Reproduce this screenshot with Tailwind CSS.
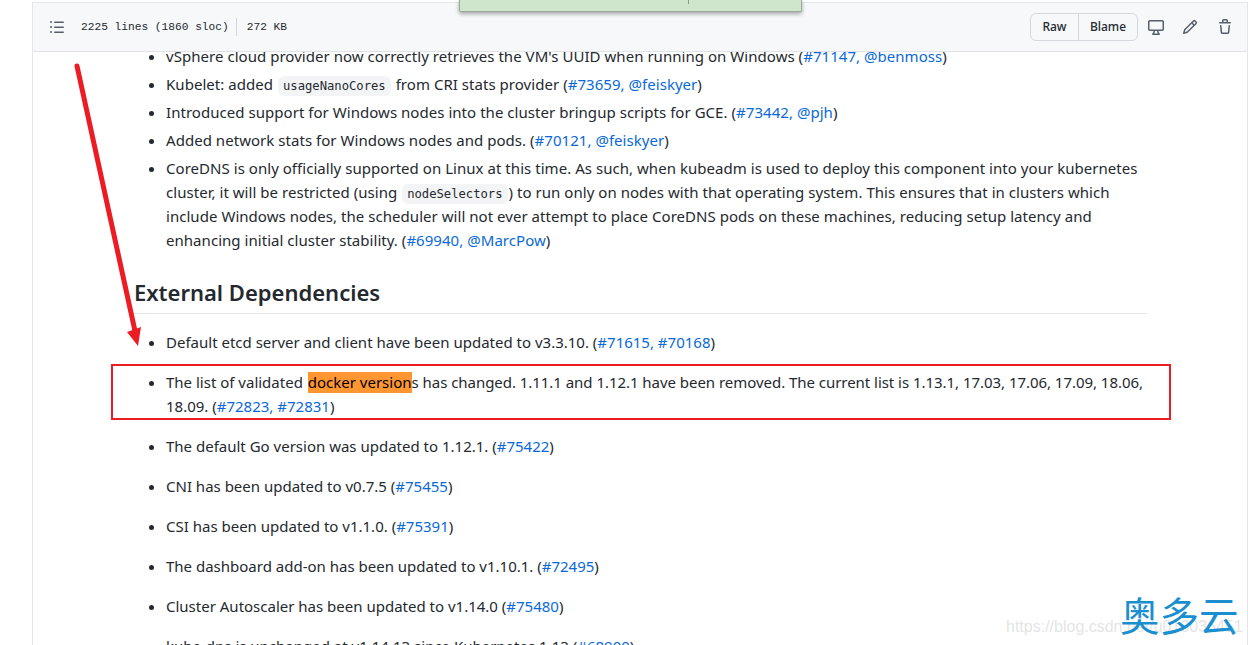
<!DOCTYPE html>
<html lang="en">
<head>
<meta charset="UTF-8">
<title>CHANGELOG-1.14.md</title>
<script src="https://cdn.jsdelivr.net/npm/@tailwindcss/browser@4"></script>
</head>
<body class="bg-white h-screen overflow-hidden relative font-['Noto_Sans',sans-serif] text-[#24292f]">
  <!-- File box -->
  <div class="ml-[32px] mt-[2px] h-[643px] border-l border-t border-r border-[#e3e6ea] overflow-hidden flex flex-col">
    <!-- Header -->
    <div class="h-[49px] shrink-0 bg-[#f6f8fa] border-b border-[#dfe3e7] flex items-center pl-[16px] pr-[14px] relative z-10">
      <svg class="w-4 h-4 text-[#57606a]" viewBox="0 0 16 16" fill="currentColor"><path d="M5.75 2.5h8.5a.75.75 0 0 1 0 1.5h-8.5a.75.75 0 0 1 0-1.5Zm0 5h8.5a.75.75 0 0 1 0 1.5h-8.5a.75.75 0 0 1 0-1.5Zm0 5h8.5a.75.75 0 0 1 0 1.5h-8.5a.75.75 0 0 1 0-1.5ZM2 14a1 1 0 1 1 0-2 1 1 0 0 1 0 2Zm1-6a1 1 0 1 1-2 0 1 1 0 0 1 2 0ZM2 4a1 1 0 1 1 0-2 1 1 0 0 1 0 2Z"/></svg>
      <div class="ml-[16px] flex items-center font-['Liberation_Mono',monospace] text-[11.2px] text-[#24292f]">
        <span>2225 lines (1860 sloc)</span>
        <span class="w-px h-[18px] bg-[#d0d7de] mx-[7px]"></span>
        <span class="ml-[3px]">272 KB</span>
      </div>
      <div class="ml-auto flex items-center">
        <div class="flex h-[28px] border border-[#d5d9de] rounded-[6px] bg-[#f6f8fa] text-[12px] font-medium">
          <span class="w-[48px] flex items-center justify-center border-r border-[#d5d9de]">Raw</span>
          <span class="w-[58px] flex items-center justify-center">Blame</span>
        </div>
        <svg class="w-4 h-4 ml-[10px] text-[#57606a]" viewBox="0 0 16 16" fill="currentColor"><path d="M14.25 1c.966 0 1.75.784 1.75 1.75v7.5A1.75 1.75 0 0 1 14.25 12h-3.727c.099 1.041.52 1.872 1.292 2.757A.752.752 0 0 1 11.25 16h-6.5a.75.75 0 0 1-.565-1.243c.772-.885 1.192-1.716 1.292-2.757H1.75A1.75 1.75 0 0 1 0 10.25v-7.5C0 1.784.784 1 1.75 1ZM1.75 2.5a.25.25 0 0 0-.25.25v7.5c0 .138.112.25.25.25h12.5a.25.25 0 0 0 .25-.25v-7.5a.25.25 0 0 0-.25-.25ZM9.018 12H6.982a5.72 5.72 0 0 1-.765 2.5h3.566a5.72 5.72 0 0 1-.765-2.5Z"/></svg>
        <svg class="w-4 h-4 ml-[18px] text-[#57606a]" viewBox="0 0 16 16" fill="currentColor"><path d="M11.013 1.427a1.75 1.75 0 0 1 2.474 0l1.086 1.086a1.75 1.75 0 0 1 0 2.474l-8.61 8.61c-.21.21-.47.364-.756.445l-3.251.93a.75.75 0 0 1-.927-.928l.929-3.25c.081-.286.235-.547.445-.758l8.61-8.61Zm.176 4.823L9.75 4.81l-6.286 6.287a.253.253 0 0 0-.064.108l-.558 1.953 1.953-.558a.253.253 0 0 0 .108-.064Zm1.238-3.763a.25.25 0 0 0-.354 0L10.811 3.75l1.439 1.44 1.263-1.263a.25.25 0 0 0 0-.354Z"/></svg>
        <svg class="w-4 h-4 ml-[19px] text-[#57606a]" viewBox="0 0 16 16" fill="currentColor"><path d="M11 1.75V3h2.25a.75.75 0 0 1 0 1.5H2.75a.75.75 0 0 1 0-1.5H5V1.75C5 .784 5.784 0 6.75 0h2.5C10.216 0 11 .784 11 1.75ZM4.496 6.675l.66 6.6a.25.25 0 0 0 .249.225h5.19a.25.25 0 0 0 .249-.225l.66-6.6a.75.75 0 0 1 1.492.149l-.66 6.6A1.748 1.748 0 0 1 10.595 15h-5.19a1.75 1.75 0 0 1-1.741-1.575l-.66-6.6a.75.75 0 1 1 1.492-.15ZM6.5 1.75V3h3V1.75a.25.25 0 0 0-.25-.25h-2.5a.25.25 0 0 0-.25.25Z"/></svg>
      </div>
    </div>

    <!-- Markdown body -->
    <div class="pl-[101px] pr-[100px] -mt-[8px] text-[15px] leading-[24px]">
      <ul class="list-disc pl-[32px] space-y-[4px] tracking-[0.04px]">
        <li>vSphere cloud provider now correctly retrieves the VM's UUID when running on Windows (<a class="text-[#0969da]">#71147, @benmoss</a>)</li>
        <li>Kubelet: added <code class="font-['DejaVu_Sans_Mono',monospace] text-[12.2px] leading-[16px] tracking-normal bg-[#f3f4f6] rounded-[6px] px-[5px] py-[3px] mx-[1px]">usageNanoCores</code> from CRI stats provider (<a class="text-[#0969da]">#73659, @feiskyer</a>)</li>
        <li>Introduced support for Windows nodes into the cluster bringup scripts for GCE. (<a class="text-[#0969da]">#73442, @pjh</a>)</li>
        <li>Added network stats for Windows nodes and pods. (<a class="text-[#0969da]">#70121, @feiskyer</a>)</li>
        <li>CoreDNS is only officially supported on Linux at this time. As such, when kubeadm is used to deploy this component into your kubernetes<br>cluster, it will be restricted (using <code class="font-['DejaVu_Sans_Mono',monospace] text-[12.2px] leading-[16px] tracking-normal bg-[#f3f4f6] rounded-[6px] px-[5px] py-[3px] mx-[1px]">nodeSelectors</code>) to run only on nodes with that operating system. This ensures that in clusters which<br>include Windows nodes, the scheduler will not ever attempt to place CoreDNS pods on these machines, reducing setup latency and<br>enhancing initial cluster stability. (<a class="text-[#0969da]">#69940, @MarcPow</a>)</li>
      </ul>
      <h2 class="mt-[25px] pb-[6px] border-b border-[#e5e8eb] text-[22px] leading-[30px] font-semibold">External Dependencies</h2>
      <ul class="list-disc pl-[32px] mt-[16px] space-y-[16px]">
        <li>Default etcd server and client have been updated to v3.3.10. (<a class="text-[#0969da]">#71615, #70168</a>)</li>
        <li>The list of validated <mark class="bg-[#ff9632] text-black inline-block h-[21px] leading-[21px] ml-px">docker version</mark><span class="tracking-[-0.04px]">s has changed. 1.11.1 and 1.12.1 have been removed. The current list is 1.13.1, 17.03, 17.06, 17.09, 18.06,</span><br>18.09. (<a class="text-[#0969da]">#72823, #72831</a>)</li>
        <li>The default Go version was updated to 1.12.1. (<a class="text-[#0969da]">#75422</a>)</li>
        <li>CNI has been updated to v0.7.5 (<a class="text-[#0969da]">#75455</a>)</li>
        <li>CSI has been updated to v1.1.0. (<a class="text-[#0969da]">#75391</a>)</li>
        <li>The dashboard add-on has been updated to v1.10.1. (<a class="text-[#0969da]">#72495</a>)</li>
        <li>Cluster Autoscaler has been updated to v1.14.0 (<a class="text-[#0969da]">#75480</a>)</li>
        <li>kube-dns is unchanged at v1.14.13 since Kubernetes 1.13 (<a class="text-[#0969da]">#68900</a>)</li>
      </ul>
    </div>
  </div>

  <!-- Notification strip cut off by the top of the window -->
  <div class="absolute left-[459px] top-0 w-[343px] h-[12px] bg-[#cfe6cd] border border-t-0 border-[#9aa89a] rounded-b-[2px] shadow-[0_2px_4px_rgba(0,0,0,0.35)] z-20">
    <div class="absolute left-[228px] top-0 w-px h-[4px] bg-[#8a9a8a]"></div>
  </div>

  <!-- Annotations -->
  <svg class="absolute left-0 top-0 z-20 pointer-events-none" width="1248" height="645">
    <line x1="77" y1="66" x2="135" y2="331" stroke="#ed1c24" stroke-width="5" stroke-linecap="round"/>
    <polygon points="127,332 141,327 138,346" fill="#ed1c24" />
    <rect x="112" y="365" width="1058" height="54" fill="none" stroke="#ed1c24" stroke-width="2"/>
  </svg>

  <!-- Watermarks -->
  <div class="absolute left-[1006px] top-[617px] z-20 font-['Liberation_Sans',sans-serif] text-[16px] leading-[20px] text-[#dddddd]/80 whitespace-nowrap">https://blog.csdn.net/u013036451</div>
  <div class="absolute left-[1120px] top-[589px] z-30 font-['Noto_Sans_CJK_SC',sans-serif] text-[39.5px] leading-[50px] text-[#1a8fcf] whitespace-nowrap">奥多云</div>
</body>
</html>
